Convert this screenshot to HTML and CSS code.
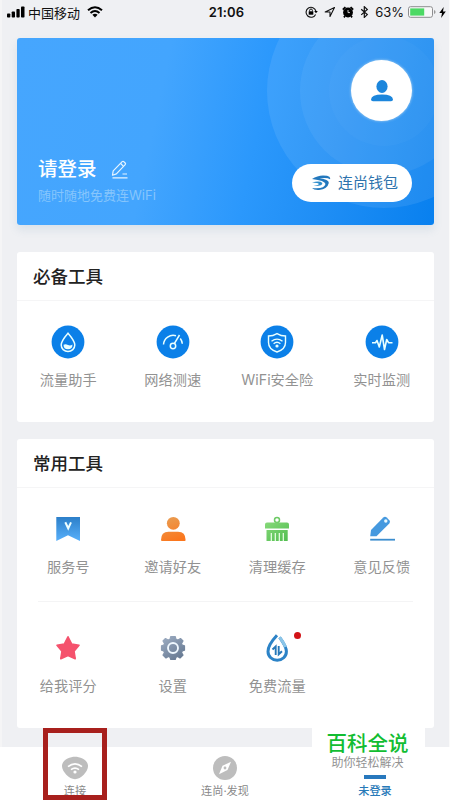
FILE: index.html
```html
<!DOCTYPE html>
<html lang="zh-CN">
<head>
<meta charset="utf-8">
<meta name="viewport" content="width=device-width, initial-scale=1">
<title>未登录</title>
<link rel="stylesheet" href="styles.css">
</head>
<body>
<div class="screen">
  <header class="status">
    <div class="status-left">
      <svg width="18" height="12" viewBox="0 0 18 12"><rect x="0" y="7.5" width="3.3" height="4" rx=".8"/><rect x="4.7" y="5.5" width="3.3" height="6" rx=".8"/><rect x="9.4" y="3" width="3.3" height="8.500" rx=".8"/><rect x="14" y="0.500" width="3.500" height="11" rx=".8"/></svg>
      <span class="carrier">中国移动</span>
      <svg class="wifi" width="16" height="12" viewBox="0 0 16 12"><g fill="none" stroke="#000" stroke-width="2"><path d="M1 4.300Q8-1.900 15 4.300"/><path d="M3.500 6.900Q8 3 12.500 6.900"/></g><path d="M5.400 8.700Q8 6.700 10.600 8.700L8 11.500Z"/></svg>
    </div>
    <div class="time">21:06</div>
    <div class="status-right">
      <svg width="13" height="12" viewBox="0 0 13 12"><path d="M10.600 8.400A5 5 0 1 1 10.900 5" fill="none" stroke="#111" stroke-width="1.100"/><path d="M9.200 5h3.600L11 7.300Z"/><rect x="3.700" y="5.300" width="4.600" height="3.400"/><path d="M4.600 5.500V4.400a1.400 1.400 0 0 1 2.800 0v1.100" fill="none" stroke="#111"/></svg>
      <svg width="12" height="12" viewBox="0 0 12 12"><path d="M10.500 1.500L1.200 6H6V10.500Z" fill="none" stroke="#111" stroke-width="1.100" stroke-linejoin="round"/></svg>
      <svg width="12" height="12" viewBox="0 0 12 12"><circle cx="6" cy="6.500" r="4.900"/><path d="M.8 3.600L3.400 1M11.200 3.600L8.600 1M3 10L1.900 11.400M9 10l1.100 1.400" stroke="#000" stroke-width="1.700"/><path d="M6 4V6.600H8" fill="none" stroke="#fff" stroke-width=".8"/></svg>
      <svg width="9" height="12" viewBox="0 0 9 12"><path d="M1.200 3.200L7.300 8.600L4.300 11.400V.7L7.300 3.400L1.200 8.900" fill="none" stroke="#111" stroke-width="1.200"/></svg>
      <span class="percent">63%</span>
      <svg class="battery" width="28" height="12" viewBox="0 0 28 12"><rect x=".5" y=".7" width="24" height="10.600" rx="2" fill="#f8f8f8" stroke="#8d8d8f"/><rect x="2.200" y="2.400" width="14" height="7.200" fill="#4cd964"/><path d="M26 4v4q1.600-.4 1.600-2T26 4" fill="#999"/></svg>
      <svg width="7" height="11" viewBox="0 0 7 11"><path d="M4.700 0L.3 6H3L2.100 11L6.800 4.500H4Z"/></svg>
    </div>
  </header>

  <section class="hero">
    <svg class="rings" width="417" height="187" viewBox="0 0 417 187"><g fill="#fff"><circle cx="367" cy="53" r="117" opacity=".085"/><circle cx="367" cy="53" r="84" opacity=".055"/><circle cx="367" cy="53" r="55" opacity=".025"/></g></svg>
    <div class="login">
      <div class="login-title"><span>请登录</span>
        <svg width="18" height="19" viewBox="0 0 18 19" fill="none" stroke="#e8f5ff" stroke-width="1.200"><path d="M1.500 15.200L2.200 10.900L11.200 1.700Q12 .9 13 1.800L14.200 3Q15 3.900 14.200 4.700L5.400 13.900Z" stroke-linejoin="round"/><path d="M9.700 3.500L12.500 6.300M11.500 14H16M1.500 17.800H16.500"/></svg>
      </div>
      <div class="login-sub">随时随地免费连WiFi</div>
    </div>
    <div class="account">
      <div class="avatar"><svg width="24" height="24" viewBox="0 0 24 24" fill="#1c86dc"><ellipse cx="12" cy="7.500" rx="5.600" ry="6.400"/><path d="M1 20.500Q1.500 15.500 12 15.500T23 20.500Q23 22.300 21 22.300H3Q1 22.300 1 20.500Z"/></svg></div>
      <div class="wallet">
        <svg width="20" height="16" viewBox="0 0 20 16"><path d="M1 4Q8-.8 16 .8Q20 1.800 19 4.200Q16 2.300 8.500 3.500Q18 4.200 17.800 8Q16.500 14 8 15Q3 15.300 1 13Q13.500 14.300 14.500 9Q14 5.500 1 4Z" fill="#2378bd"/><path d="M1 7.500Q9 5.500 11.300 8Q12 11.300 2.500 10.900Q8 10.200 7.800 9Q7 7.500 1 7.500Z" fill="#2e8dcc"/></svg>
        <span>连尚钱包</span>
      </div>
    </div>
  </section>

  <section class="card essential">
    <h2>必备工具</h2>
    <div class="grid">
      <div class="tool">
        <svg width="34" height="34" viewBox="0 0 34 34"><circle cx="17" cy="17" r="16.400" fill="#0b80e8"/><path d="M17 8.200Q10.200 16 10.200 20A6.800 6.500 0 0 0 23.800 20Q23.800 16 17 8.200Z" fill="none" stroke="#e9ffff" stroke-width="1.500"/><path d="M12.500 19.700Q14.700 18.800 17 20T21.500 19.500Q21.500 24.200 17 24.200T12.500 19.700Z" fill="#e9ffff"/></svg>
        <span>流量助手</span>
      </div>
      <div class="tool">
        <svg width="34" height="34" viewBox="0 0 34 34"><circle cx="17" cy="17" r="16.400" fill="#0b80e8"/><g fill="none" stroke="#e9ffff" stroke-width="1.500"><path d="M7.500 19.500A9.700 9.700 0 0 1 20 10.800M24.300 13.500A10 10 0 0 1 26.300 18.800M23.500 10L18.300 18.600"/><circle cx="17" cy="21" r="2.700"/></g></svg>
        <span>网络测速</span>
      </div>
      <div class="tool">
        <svg width="34" height="34" viewBox="0 0 34 34"><circle cx="17" cy="17" r="16.400" fill="#0b80e8"/><g fill="none" stroke="#e9ffff" stroke-width="1.400"><path d="M17 8.600Q21 11 25.500 11V17.500Q25.500 24.300 17 27Q8.500 24.300 8.500 17.500V11Q13 11 17 8.600Z"/><path d="M11.500 16.200Q17 12 22.500 16.200M13.600 18.700Q17 15.900 20.400 18.700"/></g><circle cx="17" cy="21" r="1.600" fill="#e9ffff"/></svg>
        <span>WiFi安全险</span>
      </div>
      <div class="tool">
        <svg width="34" height="34" viewBox="0 0 34 34"><circle cx="17" cy="17" r="16.400" fill="#0b80e8"/><path d="M7 17.700H10.500L12 15.500L14.300 22L17.200 10L19.500 24.500L21.700 14.500L23.500 17.700H27.500" fill="none" stroke="#e9ffff" stroke-width="1.600" stroke-linejoin="round"/></svg>
        <span>实时监测</span>
      </div>
    </div>
  </section>

  <section class="card common">
    <h2>常用工具</h2>
    <div class="grid first-row">
      <div class="tool">
        <svg width="34" height="34" viewBox="0 0 34 34"><defs><linearGradient id="ribbon" x2="0" y2="1"><stop stop-color="#2c7fc9"/><stop offset="1" stop-color="#58b0fb"/></linearGradient></defs><path d="M5.300 5H29V29L17 23.300L5.300 29Z" fill="url(#ribbon)"/><path d="M14.300 10.300L17.200 16.300L20 10.300" fill="none" stroke="#efffff" stroke-width="2"/></svg>
        <span>服务号</span>
      </div>
      <div class="tool">
        <svg width="34" height="34" viewBox="0 0 34 34"><defs><linearGradient id="friend" gradientUnits="userSpaceOnUse" x1="12" y1="5" x2="20" y2="29"><stop stop-color="#e99c51"/><stop offset="1" stop-color="#fb761d"/></linearGradient></defs><g fill="url(#friend)"><circle cx="17.300" cy="11.300" r="6.400"/><path d="M5 28Q5 19.700 12.500 19.700H22Q29.600 19.700 29.600 28Q29.600 29 28.600 29H6Q5 29 5 28Z"/></g></svg>
        <span>邀请好友</span>
      </div>
      <div class="tool">
        <svg width="34" height="34" viewBox="0 0 34 34"><defs><linearGradient id="brush" x2="1" y2="1"><stop stop-color="#86d979"/><stop offset="1" stop-color="#51bd50"/></linearGradient></defs><circle cx="17" cy="8" r="2.500" fill="none" stroke="#6dca65" stroke-width="1.500"/><path d="M7 10.500H27Q29 10.500 29 12.500V16.500H5V12.500Q5 10.500 7 10.500ZM6.500 18H27.700V29H6.500Z" fill="url(#brush)"/><path d="M11.300 21V29M15.300 21V29M19.300 21V29M23.300 21V29" stroke="#edffe9" stroke-width="1.200"/></svg>
        <span>清理缓存</span>
      </div>
      <div class="tool">
        <svg width="34" height="34" viewBox="0 0 34 34"><path d="M5.200 24.200L6 18L18.300 5.500Q20 4 21.700 5.500L24.300 8.200Q25.800 9.800 24.300 11.500L11.500 24.200Z" fill="#4599df"/><circle cx="20.800" cy="9" r="1.700" fill="#e9f9ff"/><path d="M5.200 27.700H30" stroke="#3c8dce" stroke-width="1.800"/></svg>
        <span>意见反馈</span>
      </div>
    </div>
    <div class="divider"></div>
    <div class="grid second-row">
      <div class="tool">
        <svg width="34" height="34" viewBox="0 0 34 34"><path d="M17 5.800L20.700 13L28 14.300L23 20.200L24.200 27.700L17 24.600L9.800 27.700L11 20.200L6 14.300L13.300 13Z" fill="#f5526d" stroke="#f5526d" stroke-width="1.600" stroke-linejoin="round"/></svg>
        <span>给我评分</span>
      </div>
      <div class="tool">
        <svg width="34" height="34" viewBox="0 0 34 34"><defs><linearGradient id="gear" gradientUnits="userSpaceOnUse" x1="9" y1="6" x2="24" y2="28"><stop stop-color="#9aaac0"/><stop offset="1" stop-color="#667992"/></linearGradient></defs><path fill="url(#gear)" stroke="url(#gear)" stroke-width="1.200" stroke-linejoin="round" d="M14.800 5.500H19.200L20 8.200L22 9L24.500 7.500L27 10L25.500 12.500L26.300 14.200L28.500 14.800V19.200L26.300 19.800L25.500 21.700L27 24L24 27L21.700 25.500L20 26.200L19.200 28.500H14.800L14 26.200L12.300 25.500L10 27L7 24L8.500 21.700L7.700 19.800L5.500 19.200V14.800L7.700 14.200L8.500 12.500L7 10L9.500 7.500L12 9L14 8.200Z"/><circle cx="17" cy="17" r="5" fill="none" stroke="#eff8ff" stroke-width="1.900"/></svg>
        <span>设置</span>
      </div>
      <div class="tool">
        <svg width="34" height="34" viewBox="0 0 34 34"><path d="M17 4.300Q8 14 8 20.500A9.200 8.800 0 0 0 26.400 20.500Q26.400 15.500 19.600 6.300" fill="none" stroke="#2c83c7" stroke-width="3"/><path d="M19.600 6.300Q24 12 25.500 16" fill="none" stroke="#8bc5e8" stroke-width="3"/><path d="M12.500 18.500L15.700 15.500V24M18.700 15V23.300L22 20.300" fill="none" stroke="#2678b9" stroke-width="1.900"/></svg>
        <span>免费流量</span><i class="dot"></i>
      </div>
    </div>
  </section>

  <nav class="tabs">
    <div class="tab">
      <svg width="26" height="24" viewBox="0 0 26 24"><path d="M13 .8C18 .8 26 4 26 10C26 15.500 19 23.200 13 23.200S0 15.500 0 10C0 4 8 .8 13 .8Z" fill="#bdbdbd"/><g fill="none" stroke="#fff" stroke-width="1.600"><path d="M6 10.700Q13 5 20 10.700M9 13.700Q13 10.500 17 13.700"/></g><circle cx="13" cy="16" r="1.600" fill="#fff"/></svg>
      <span>连接</span>
    </div>
    <div class="tab">
      <svg width="24" height="24" viewBox="0 0 24 24"><circle cx="12" cy="12" r="12" fill="#bdbdbd"/><path d="M18 5.800L14.500 14L6 18.300L9.500 9.800Z" fill="#fff"/><circle cx="12" cy="12" r="1.400" fill="#bdbdbd"/></svg>
      <span>连尚·发现</span>
    </div>
    <div class="tab active"><b class="bar"></b><span>未登录</span></div>
  </nav>
  <div class="highlight"></div>
  <div class="stamp"><strong>百科全说</strong><span>助你轻松解决</span></div>
</div>
</body>
</html>
```

FILE: styles.css
```css
* { box-sizing: border-box; }
body {
  margin: 0;
  font-family: Inter, "Noto Sans CJK SC", sans-serif;
}
svg { display: block; flex: none; }
.screen {
  position: relative;
  width: 450px;
  height: 800px;
  overflow: hidden;
  background: #eff0f3;
  box-shadow: inset 2px 0 #f5f5f6, inset -1px 0 #fafafa;
  padding: 0 16px 0 17px;
}
.status {
  display: grid;
  grid-template-columns: 1fr auto 1fr;
  align-items: center;
  height: 24px;
  margin: 0 -12px 14px -10px;
  color: #111;
}
.status-left, .status-right { display: flex; align-items: center; }
.carrier { font-size: 13px; line-height: 20px; margin: 1px 0 0 3px; }
.wifi { margin-left: 7px; }
.time { font-size: 13px; font-weight: 600; line-height: 20px; letter-spacing: .2px; }
.status-right { justify-content: flex-end; gap: 6px; }
.percent { font-size: 13px; line-height: 20px; }
.battery { margin-left: -2px; margin-right: -3px; }
.hero {
  position: relative;
  display: flex;
  justify-content: space-between;
  width: 417px;
  height: 187px;
  border-radius: 3px;
  background: linear-gradient(102deg, #46a6fe 0%, #43a5fe 34%, #2b98fc 57%, #1f8ef5 75%, #0880ef 100%);
  box-shadow: 0 5px 8px rgba(100, 140, 180, .14);
}
.rings { position: absolute; inset: 0; border-radius: 3px; }
.login { padding: 117px 0 0 21px; }
.login-title {
  display: flex;
  align-items: center;
  gap: 14px;
  color: #fff;
  font-size: 19.500px;
  font-weight: 500;
  line-height: 28px;
}
.login-sub { color: #86c5fc; font-size: 13px; line-height: 20px; margin-top: 2px; }
.account {
  position: relative;
  display: flex;
  flex-direction: column;
  align-items: flex-end;
  padding: 22px 22px 0 0;
}
.avatar {
  display: flex;
  align-items: center;
  justify-content: center;
  width: 61px;
  height: 61px;
  border-radius: 50%;
  background: #fff;
  box-shadow: 0 0 2px 1px #75b7f1;
}
.wallet {
  display: flex;
  align-items: center;
  gap: 7px;
  width: 120px;
  height: 38px;
  margin-top: 43px;
  padding-left: 19px;
  border-radius: 19px;
  background: #fff;
  color: #2d73ad;
  font-size: 15px;
  line-height: 20px;
}
.card { width: 417px; border-radius: 3px; background: #fff; }
.essential { height: 170px; margin-top: 27px; }
.common { height: 289px; margin-top: 17px; }
h2 {
  height: 49px;
  margin: 0;
  padding-left: 16px;
  border-bottom: 1px solid #f5f5f6;
  color: #222;
  font-size: 17.500px;
  font-weight: 500;
  line-height: 50px;
}
.grid { display: grid; grid-template-columns: repeat(4, 1fr); margin-left: -1px; }
.tool {
  position: relative;
  display: flex;
  flex-direction: column;
  align-items: center;
  color: #929292;
  font-size: 14.200px;
  line-height: 20px;
}
.essential .grid { padding-top: 24px; }
.tool span { margin-top: 11px; white-space: nowrap; }
.first-row { height: 113px; padding-top: 24px; }
.divider { height: 1px; margin: 0 21px; background: #f4f4f5; }
.second-row { padding-top: 29px; }
.dot {
  position: absolute;
  left: 69px;
  top: 1px;
  width: 7px;
  height: 7px;
  border-radius: 50%;
  background: #d21317;
}
.tabs {
  display: grid;
  grid-template-columns: repeat(3, 1fr);
  height: 53px;
  margin: 19px -16px 0 -17px;
  background: #fff;
}
.tab {
  display: flex;
  flex-direction: column;
  align-items: center;
  padding-top: 9px;
  color: #888;
  font-size: 11.200px;
  line-height: 16px;
}
.tab span { margin-top: 3px; }
.active { padding-top: 28px; color: #2779b8; font-weight: 500; }
.bar { width: 22px; height: 4px; background: #2878bd; }
.active span { margin-top: 4px; }
.highlight {
  position: absolute;
  left: 43px;
  top: 728px;
  width: 64px;
  height: 72px;
  border: 5px solid #a8201d;
}
.stamp {
  position: absolute;
  left: 312px;
  top: 728px;
  display: flex;
  flex-direction: column;
  align-items: center;
  width: 113px;
  height: 46px;
  padding: 1px 2px 0 0;
  background: #fff;
}
.stamp strong { color: #12bd32; font-size: 20.500px; font-weight: 500; line-height: 30px; }
.stamp span { color: #929292; font-size: 12px; line-height: 16px; margin-top: -4px; }
```
